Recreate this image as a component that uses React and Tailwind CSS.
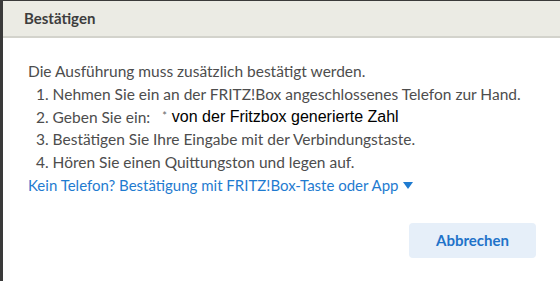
import React from 'react';

export default function App() {
  return (
    <div className="w-[560px] h-[281px] bg-[#3a3a3a] pl-[3px] pt-px overflow-hidden" style={{ fontFamily: 'Lato, "Liberation Sans", sans-serif' }}>
      <div className="h-full bg-white flex flex-col">
        <div className="h-[37px] bg-[#ebebe4] border-b-2 border-[#d3d3cc] flex items-center px-[21px] shrink-0">
          <h1 className="text-[15px] font-bold text-[#3d3d3d]">Bestätigen</h1>
        </div>
        <div className="pl-[25px] pt-[22px] text-[15.5px] leading-[22.8px] text-[#4d4d4d]">
          <p>Die Ausführung muss zusätzlich bestätigt werden.</p>
          <ol className="pl-[8px]">
            <li>1. Nehmen Sie ein an der FRITZ!Box angeschlossenes Telefon zur Hand.</li>
            <li className="flex items-center">
              <span>2. Geben Sie ein:</span>
              <span className="ml-[12px] text-[11px] leading-none text-[#666] -mt-[3px]">*</span>
              <span className="ml-[5px] text-[16px] text-black" style={{ fontFamily: '"Liberation Sans", Arial, sans-serif' }}>von der Fritzbox generierte Zahl</span>
            </li>
            <li>3. Bestätigen Sie Ihre Eingabe mit der Verbindungstaste.</li>
            <li>4. Hören Sie einen Quittungston und legen auf.</li>
          </ol>
          <a className="flex items-center gap-[5px] text-[15px] text-[#1f7bd0] cursor-pointer">
            Kein Telefon? Bestätigung mit FRITZ!Box-Taste oder App
            <svg width="10" height="7" viewBox="0 0 10 7"><path d="M0 0h10L5 7z" fill="#1f7bd0" /></svg>
          </a>
        </div>
        <div className="flex justify-end pr-[24px] pt-[26px]">
          <button className="w-[127px] h-[35px] rounded-[4px] bg-[#e6eff9] text-[#1f73c9] font-bold text-[15px]">Abbrechen</button>
        </div>
      </div>
    </div>
  );
}
